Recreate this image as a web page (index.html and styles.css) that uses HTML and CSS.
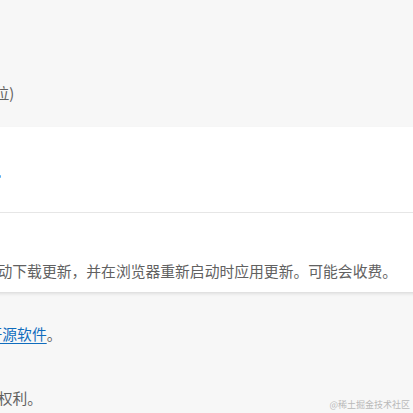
FILE: index.html
```html
<!DOCTYPE html>
<html lang="zh-CN">
<head>
<meta charset="utf-8">
<title>关于</title>
<link rel="stylesheet" href="styles.css">
</head>
<body>
<main class="page">
  <p class="version">位)</p>
  <section class="card">
    <div class="row row-status">
      <span class="status-mark"></span>
    </div>
    <div class="row row-metered">
      <p class="desc">动下载更新，并在浏览器重新启动时应用更新。可能会收费。</p>
    </div>
  </section>
  <p class="oss"><a href="#" class="link">开源软件</a>。</p>
  <p class="copy">权利。</p>
</main>
<div class="watermark">@稀土掘金技术社区</div>
</body>
</html>
```

FILE: styles.css
```css
html, body {
  margin: 0;
  padding: 0;
  height: 100%;
  overflow: hidden;
}
body {
  background: #f7f7f7;
  font-family: "Noto Sans CJK SC", "Noto Sans", sans-serif;
  font-size: 14.8px;
  line-height: 20px;
  color: #616161;
  position: relative;
}
.page {
  display: flex;
  flex-direction: column;
  padding-top: 83px;
}
p {
  margin: 0;
  white-space: nowrap;
}
.version {
  margin-left: -5.5px;
}
.card {
  margin: 24px -30px 0 -30px;
  background: #ffffff;
  box-shadow: 0 1.6px 3.6px rgba(0, 0, 0, 0.13), 0 0.3px 0.9px rgba(0, 0, 0, 0.11);
  display: flex;
  flex-direction: column;
}
.row {
  padding-left: 30px;
}
.row-status {
  height: 85px;
  border-bottom: 1px solid #e6e6e6;
}
.status-mark {
  display: block;
  width: 2px;
  height: 3px;
  margin-top: 48px;
  margin-left: -1px;
  background: #5ab0f2;
  border-radius: 1px;
}
.row-metered {
  padding-top: 48px;
  padding-bottom: 11px;
}
.desc {
  margin-left: -2.5px;
}
.oss {
  margin-top: 32px;
  margin-left: -12.5px;
}
.link {
  color: #0f6cbd;
  text-decoration: underline;
  text-underline-offset: 3px;
}
.copy {
  margin-top: 44px;
  margin-left: -2.3px;
}
.watermark {
  position: absolute;
  right: 3px;
  bottom: 2px;
  font-size: 9px;
  line-height: 12px;
  color: #b9b9b9;
}
```
